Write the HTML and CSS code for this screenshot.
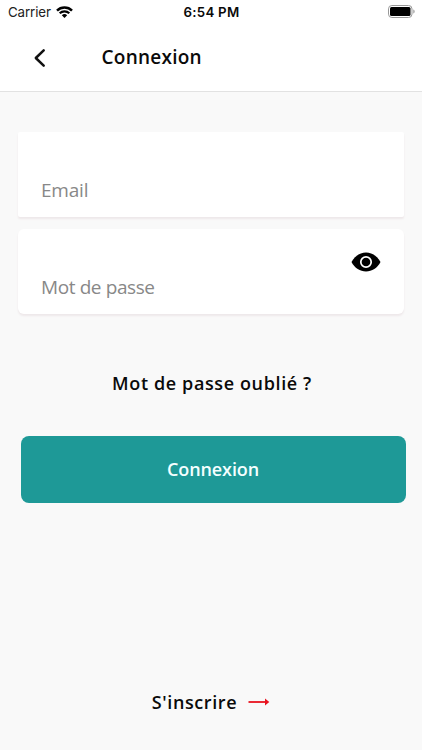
FILE: index.html
```html
<!DOCTYPE html>
<html lang="fr">
<head>
    <meta charset="UTF-8">
    <meta name="viewport" content="width=device-width, initial-scale=1.0">
    <title>Connexion</title>
    <link rel="stylesheet" href="styles.css">
</head>
<body>
    <div class="status-bar">
        <div class="carrier">
            <span>Carrier</span>
            <svg class="wifi" width="17" height="12" viewBox="0 0 17 12">
                <path d="M1 4.6a10.6 10.6 0 0 1 15 0" fill="none" stroke="#000" stroke-width="2.5"/>
                <path d="M3.7 7.3a6.8 6.8 0 0 1 9.6 0" fill="none" stroke="#000" stroke-width="2.2"/>
                <path d="M8.5 12L5.8 9.3a3.8 3.8 0 0 1 5.4 0z"/>
            </svg>
        </div>
        <span class="time">6:54 PM</span>
        <svg class="battery" width="27" height="13" viewBox="0 0 27 13">
            <rect x="0.5" y="0.5" width="23.5" height="12" rx="3.4" fill="none" stroke="#999"/>
            <rect x="2" y="2" width="20.5" height="9" rx="1.5"/>
            <path d="M25.3 4.5c1.8.7 1.8 3.3 0 4z" fill="#999"/>
        </svg>
    </div>

    <header>
        <button class="back-btn" aria-label="Retour">
            <svg width="12" height="20" viewBox="0 0 12 20">
                <path d="M9.7 2.3L1.8 10l7.9 7.7" fill="none" stroke="#111" stroke-width="2.5" stroke-linecap="round" stroke-linejoin="round"/>
            </svg>
        </button>
        <h1>Connexion</h1>
    </header>

    <main>
        <form class="login-form">
            <label class="field email">
                <span>Email</span>
            </label>
            <label class="field password">
                <span>Mot de passe</span>
                <svg class="eye" width="30" height="20" viewBox="0 0 30 20">
                    <path d="M.5 10C3.7 4 9 .5 15 .5S26.3 4 29.5 10C26.3 16 21 19.5 15 19.5S3.7 16 .5 10z"/>
                    <circle cx="15" cy="10" r="5.2" fill="none" stroke="#fff" stroke-width="1.7"/>
                </svg>
            </label>
            <a class="forgot">Mot de passe oublié ?</a>
            <button type="button" class="submit-btn">Connexion</button>
        </form>
        <a class="signup">
            <span>S'inscrire</span>
            <svg width="22" height="8" viewBox="0 0 22 8">
                <path d="M.5 4h17" stroke="#e8121f" stroke-width="1.8"/>
                <path d="M17 .5L21.3 4 17 7.5z" fill="#e8121f"/>
            </svg>
        </a>
    </main>
</body>
</html>
```

FILE: styles.css
```css
* {
    margin: 0;
    padding: 0;
    box-sizing: border-box;
}

body {
    display: flex;
    flex-direction: column;
    height: 750px;
    background-color: #f9f9f9;
    color: #0a0a0a;
    font-family: "Open Sans", "Noto Sans", sans-serif;
    overflow: hidden;
}

.status-bar {
    display: grid;
    grid-template-columns: 1fr auto 1fr;
    align-items: center;
    height: 24px;
    padding: 0 7px 0 8px;
    background-color: #fff;
    font-family: Inter, sans-serif;
    font-size: 13.3px;
}

.carrier {
    display: flex;
    align-items: center;
    gap: 5px;
    color: #222;
    letter-spacing: -0.1px;
}

.time {
    font-weight: 600;
    letter-spacing: 0.25px;
}

.battery {
    justify-self: end;
    margin-bottom: 2px;
}

header {
    display: flex;
    align-items: center;
    height: 68px;
    padding-left: 34px;
    background-color: #fff;
    border-bottom: 1px solid #e2e2e2;
}

.back-btn {
    display: flex;
    width: 67.5px;
    border: none;
    background: none;
}

h1 {
    margin-top: -1px;
    font-size: 19px;
    font-weight: 540;
    letter-spacing: 0.25px;
}

main {
    display: flex;
    flex-direction: column;
    flex: 1;
    padding: 40px 16px 34px 18px;
}

.login-form {
    display: flex;
    flex-direction: column;
}

.field {
    display: flex;
    justify-content: space-between;
    width: 386px;
    height: 85px;
    padding: 23px 23px 0;
    background-color: #fff;
    box-shadow: 0 2px 2px #eee8ea;
    color: #888;
    font-size: 19px;
    letter-spacing: -0.4px;
}

.field span {
    margin-top: 21px;
    line-height: 28px;
}

.email {
    border-radius: 2px;
    letter-spacing: -0.2px;
}

.password {
    margin-top: 12px;
    border-radius: 6px;
}

.forgot {
    align-self: center;
    margin-top: 55px;
    font-size: 18px;
    font-weight: 540;
    line-height: 28px;
    letter-spacing: 0.62px;
}

.submit-btn {
    width: 385px;
    height: 67px;
    margin: 39px 0 0 2.5px;
    padding-bottom: 2px;
    border: none;
    border-radius: 8px;
    background-color: #1e9997;
    color: #f4ffff;
    font-family: inherit;
    font-size: 18px;
    font-weight: 540;
    letter-spacing: -0.1px;
}

.signup {
    display: flex;
    align-items: center;
    align-self: center;
    gap: 11px;
    margin-top: auto;
    margin-right: 2px;
    font-size: 18px;
    font-weight: 540;
    line-height: 28px;
    letter-spacing: 0.6px;
}
```
